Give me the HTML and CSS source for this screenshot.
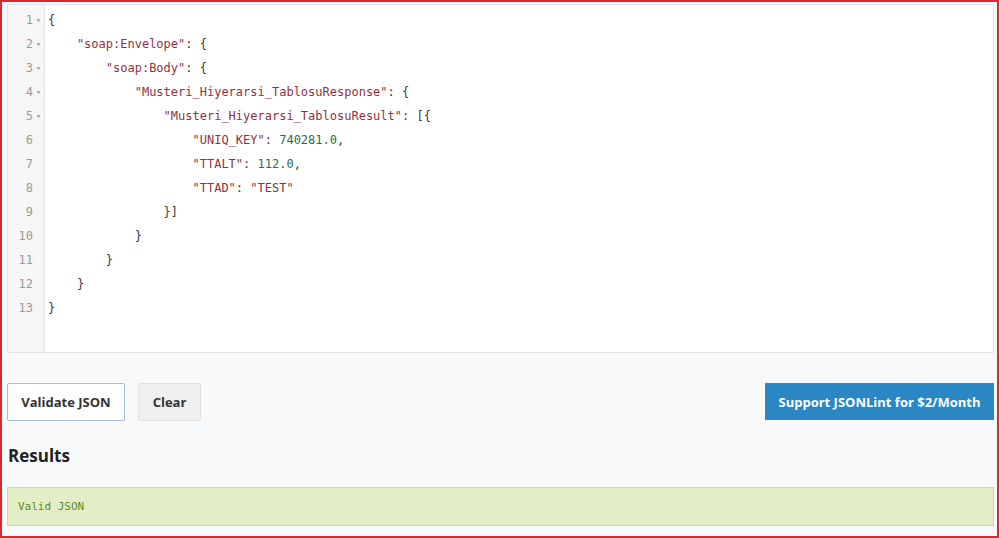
FILE: index.html
```html
<!DOCTYPE html>
<html>
	<head>
		<meta charset="utf-8" />
		<title>JSONLint</title>
		<link rel="stylesheet" href="styles.css">
	</head>
	<body>
		<div class="frame">
			<div class="editor">
				<div class="gutter">
					<div class="ln">1<span class="fold">▾</span></div>
					<div class="ln">2<span class="fold">▾</span></div>
					<div class="ln">3<span class="fold">▾</span></div>
					<div class="ln">4<span class="fold">▾</span></div>
					<div class="ln">5<span class="fold">▾</span></div>
					<div class="ln">6<span class="fold"></span></div>
					<div class="ln">7<span class="fold"></span></div>
					<div class="ln">8<span class="fold"></span></div>
					<div class="ln">9<span class="fold"></span></div>
					<div class="ln">10<span class="fold"></span></div>
					<div class="ln">11<span class="fold"></span></div>
					<div class="ln">12<span class="fold"></span></div>
					<div class="ln">13<span class="fold"></span></div>
				</div>
				<div class="code">
					<div class="line">{</div>
					<div class="line i1"><span class="key">"soap:Envelope"</span>: {</div>
					<div class="line i2"><span class="key">"soap:Body"</span>: {</div>
					<div class="line i3"><span class="key">"Musteri_Hiyerarsi_TablosuResponse"</span>: {</div>
					<div class="line i4"><span class="key">"Musteri_Hiyerarsi_TablosuResult"</span>: [{</div>
					<div class="line i5"><span class="key">"UNIQ_KEY"</span>: <span class="num">740281.0</span>,</div>
					<div class="line i5"><span class="key">"TTALT"</span>: <span class="num">112.0</span>,</div>
					<div class="line i5"><span class="key">"TTAD"</span>: <span class="key">"TEST"</span></div>
					<div class="line i4">}]</div>
					<div class="line i3">}</div>
					<div class="line i2">}</div>
					<div class="line i1">}</div>
					<div class="line">}</div>
				</div>
			</div>
			<div class="actions">
				<button class="btn btn-validate">Validate JSON</button>
				<button class="btn btn-clear">Clear</button>
				<button class="btn btn-support">Support JSONLint for $2/Month</button>
			</div>
			<h2 class="results-title">Results</h2>
			<div class="result">Valid JSON</div>
		</div>
	</body>
</html>
```

FILE: styles.css
```css
html, body
{
	margin: 0;
	padding: 0;
}
body
{
	font-family: "Open Sans", "Liberation Sans", sans-serif;
	background: #f8f9fb;
}
.frame
{
	box-sizing: border-box;
	width: 999px;
	height: 538px;
	border: 2px solid #d52b2f;
	padding: 2px 3px 0 5px;
	background: #f8f9fb;
}
.editor
{
	display: flex;
	height: 347px;
	border: 1px solid #e2e4e7;
	background: #fff;
}
.gutter
{
	width: 36px;
	padding-top: 3px;
	background: #f6f6f6;
	border-right: 1px solid #e4e4e4;
	font-family: "DejaVu Sans Mono", monospace;
	font-size: 12px;
	color: #9a9a9a;
}
.ln
{
	display: flex;
	justify-content: flex-end;
	align-items: center;
	height: 24px;
}
.fold
{
	width: 11px;
	font-size: 9px;
	text-align: center;
	color: #aaa;
}
.code
{
	padding: 3px 0 0 3px;
	font-family: "DejaVu Sans Mono", monospace;
	font-size: 12px;
	line-height: 24px;
	color: #3a3a3a;
}
.line
{
	height: 24px;
	white-space: pre;
}
.i1 { padding-left: 4ch; }
.i2 { padding-left: 8ch; }
.i3 { padding-left: 12ch; }
.i4 { padding-left: 16ch; }
.i5 { padding-left: 20ch; }
.key
{
	color: #93303e;
}
.num
{
	color: #1f6e4d;
}
.actions
{
	display: flex;
	gap: 13px;
	margin-top: 30px;
}
.btn
{
	height: 38px;
	font-family: "Open Sans", "Liberation Sans", sans-serif;
	font-size: 13px;
	font-weight: bold;
	color: #333;
	border-radius: 2px;
	padding: 0 6px;
	white-space: nowrap;
}
.btn-validate
{
	width: 118px;
	background: #fff;
	border: 1px solid #a3bcdc;
}
.btn-clear
{
	width: 63px;
	background: #efefef;
	border: 1px solid #e2e2e2;
}
.btn-support
{
	margin-left: auto;
	width: 229px;
	height: 37px;
	background: #2a87c4;
	border: 1px solid #2a87c4;
	color: #fff;
	border-radius: 0;
}
.results-title
{
	margin: 23px 0 0 1px;
	font-size: 17px;
	font-weight: bold;
	color: #222;
	line-height: 24px;
}
.result
{
	margin-top: 19px;
	height: 37px;
	line-height: 37px;
	padding-left: 10px;
	background: #e4eec6;
	border: 1px solid #c9dba2;
	font-family: "DejaVu Sans Mono", monospace;
	font-size: 11px;
	color: #5d8a2c;
}
```
